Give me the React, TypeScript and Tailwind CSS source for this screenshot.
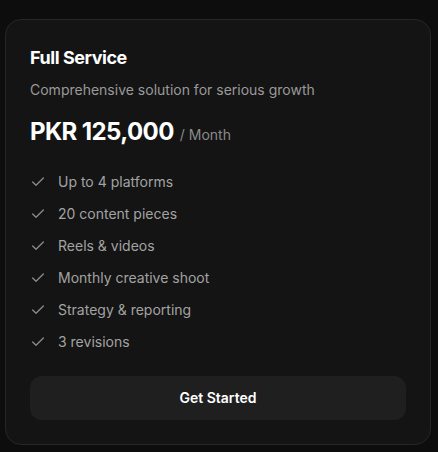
import { Check } from 'lucide-react';

const features = [
  'Up to 4 platforms',
  '20 content pieces',
  'Reels & videos',
  'Monthly creative shoot',
  'Strategy & reporting',
  '3 revisions',
];

export default function App() {
  return (
    <div className="min-h-[452px] w-full bg-[#0d0d0d] pl-[5px] pt-[19px] font-['Inter',sans-serif]">
      <div className="w-[426px] rounded-2xl border border-[#262626] bg-[#141414] p-6">
        <h3 className="text-lg font-bold leading-7 tracking-tight text-white">Full Service</h3>
        <p className="mt-2 text-sm leading-5 text-[#9a9a9a]">Comprehensive solution for serious growth</p>
        <div className="mt-4 flex items-baseline gap-1.5">
          <span className="text-2xl font-bold leading-8 tracking-tight text-white">PKR 125,000</span>
          <span className="text-sm text-[#8a8a8a]">/ Month</span>
        </div>
        <ul className="mt-6 flex flex-col gap-3">
          {features.map((f) => (
            <li key={f} className="flex items-center gap-3 text-sm leading-5 text-[#a3a3a3]">
              <Check className="h-4 w-4 shrink-0 text-[#8a8a8a]" strokeWidth={2} />
              {f}
            </li>
          ))}
        </ul>
        <button className="mt-6 w-full rounded-xl bg-[#1f1f1f] py-3 text-sm font-semibold leading-5 text-white">
          Get Started
        </button>
      </div>
    </div>
  );
}
